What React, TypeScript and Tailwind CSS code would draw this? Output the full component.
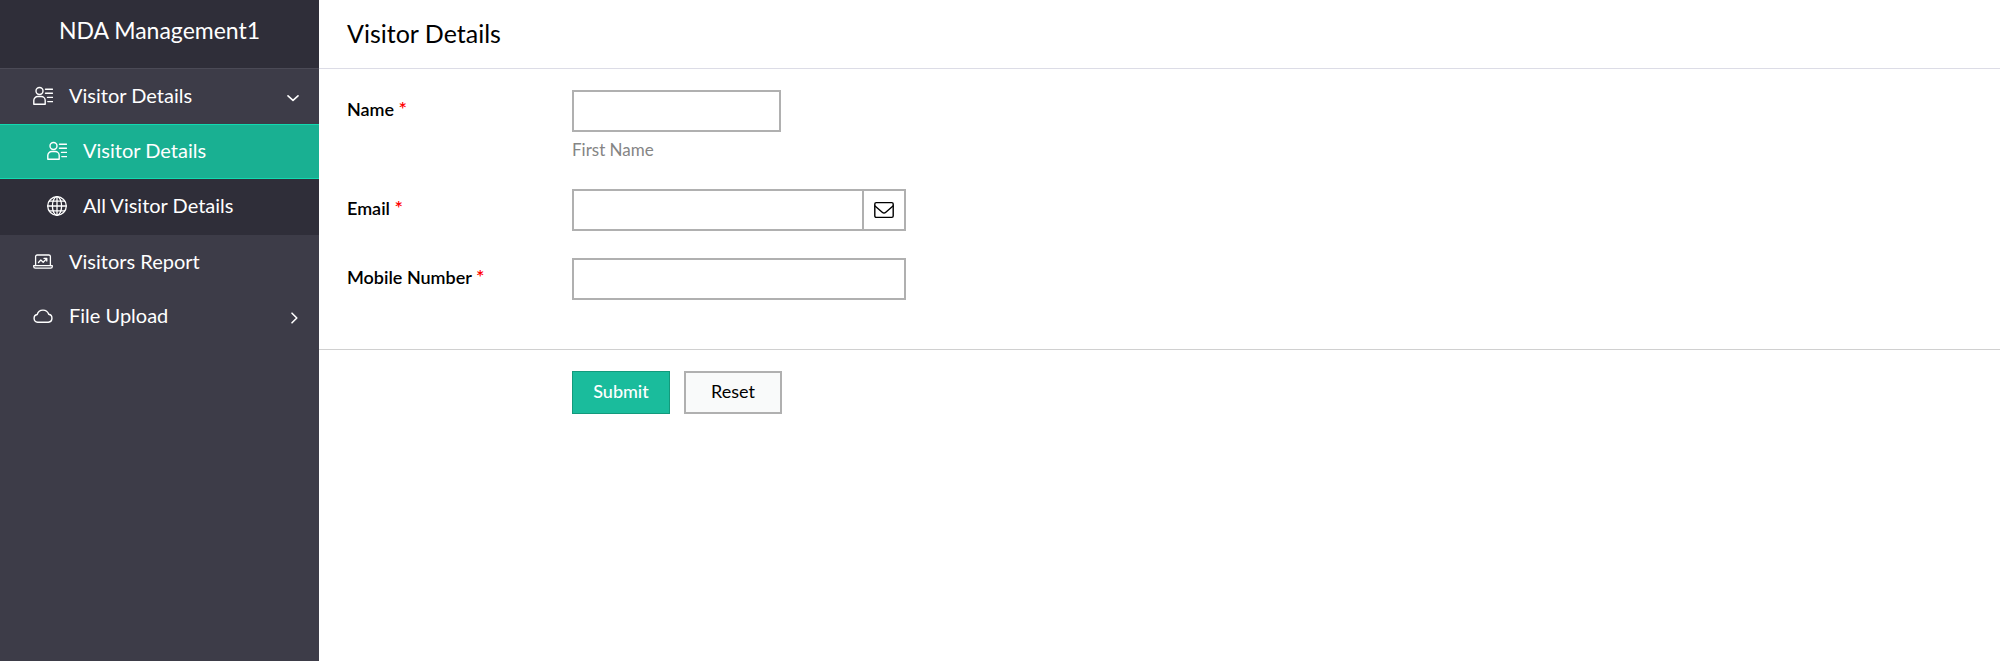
import type { ReactNode } from "react";

const stroke = {
  fill: "none",
  stroke: "currentColor",
  strokeLinecap: "round" as const,
  strokeLinejoin: "round" as const,
};

function ContactIcon() {
  return (
    <svg className="w-5 h-5" viewBox="0 0 20 20" strokeWidth="1.4" {...stroke} aria-hidden="true">
      <circle cx="6.5" cy="5" r="3.5" />
      <path d="M0.8 18.2v-3.7a4 4 0 0 1 4-4h3.4a4 4 0 0 1 4 4v3.7z" />
      <path d="M12.5 3.2H19.5M12.5 7.2H19.5M14.5 11.4H19.5M14.8 15.6H19.5" />
    </svg>
  );
}

function GlobeIcon() {
  return (
    <svg className="w-5 h-5" viewBox="0 0 20 20" strokeWidth="1.3" {...stroke} aria-hidden="true">
      <circle cx="10" cy="10" r="9.3" />
      <ellipse cx="10" cy="10" rx="4.6" ry="9.3" />
      <path d="M10 0.7V19.3M0.7 10H19.3M2.2 5.2H17.8M2.2 14.8H17.8" />
    </svg>
  );
}

function ReportIcon() {
  return (
    <svg className="w-5 h-5" viewBox="0 0 20 20" strokeWidth="1.3" {...stroke} aria-hidden="true">
      <path d="M2.6 13.5V4.6a1.6 1.6 0 0 1 1.6-1.6h11.6a1.6 1.6 0 0 1 1.6 1.6v8.9" />
      <path d="M0.7 13.7H19.3v0.8a1.7 1.7 0 0 1-1.7 1.7H2.4a1.7 1.7 0 0 1-1.7-1.7z" />
      <path d="M5.5 10.5l2.3-2.5 2.4 2.2 3.4-3.6M11 6.4h2.8v2.6" />
    </svg>
  );
}

function CloudIcon() {
  return (
    <svg className="w-5 h-5" viewBox="0 0 20 20" strokeWidth="1.4" {...stroke} aria-hidden="true">
      <path d="M4.6 16.2a3.9 3.9 0 0 1-0.4-7.7a6 6 0 0 1 11.5-0.2a4 4 0 0 1-0.3 7.9z" />
    </svg>
  );
}

function MailIcon() {
  return (
    <svg className="w-5 h-5" viewBox="0 0 20 20" strokeWidth="1.4" {...stroke} aria-hidden="true">
      <rect x="0.8" y="2.6" width="18.4" height="14.8" rx="1.4" />
      <path d="M1 6l7.2 6.2a2.7 2.7 0 0 0 3.6 0l7.2-6.2" />
    </svg>
  );
}

function Chevron({ open }: { open: boolean }) {
  return (
    <svg className="w-3 h-3 mt-1" viewBox="0 0 12 12" strokeWidth="1.6" {...stroke} aria-hidden="true">
      <path d={open ? "M1 3.8L6 8.3l5-4.5" : "M5 1.2L9.8 6L5 10.8"} />
    </svg>
  );
}

interface NavItemProps {
  icon: ReactNode;
  label: string;
  className: string;
  open?: boolean;
}

function NavItem({ icon, label, className, open }: NavItemProps) {
  return (
    <a href="#" className={`flex items-center pr-5 pb-0.5 text-xl text-white ${className}`}>
      {icon}
      <span className="ml-4 pb-0.5 flex-1">{label}</span>
      {open !== undefined && <Chevron open={open} />}
    </a>
  );
}

function FieldLabel({ htmlFor, children }: { htmlFor: string; children: ReactNode }) {
  return (
    <label htmlFor={htmlFor} className="w-[225px] shrink-0 pt-1.5 text-lg leading-6 font-semibold text-black">
      {children} <span className="text-xl leading-6 text-[#ff0000]">*</span>
    </label>
  );
}

export default function App() {
  return (
    <div className="flex min-h-screen bg-white font-[Lato,sans-serif]">
      <aside className="w-[319px] shrink-0 bg-[#3d3c48]">
        <div className="h-[69px] pb-2 flex items-center justify-center bg-[#2f2e39] border-b border-[#4b4a56] text-[23px] text-white">
          NDA Management1
        </div>
        <nav>
          <NavItem icon={<ContactIcon />} label="Visitor Details" open={true} className="h-[55px] pl-[33px]" />
          <div className="bg-[#2f2e39]">
            <NavItem
              icon={<ContactIcon />}
              label="Visitor Details"
              className="h-[55px] pl-[47px] bg-[#19b092] border-y border-[#12d9b0]"
            />
            <NavItem icon={<GlobeIcon />} label="All Visitor Details" className="h-14 pl-[47px]" />
          </div>
          <NavItem icon={<ReportIcon />} label="Visitors Report" className="h-[55px] pl-[33px]" />
          <NavItem icon={<CloudIcon />} label="File Upload" open={false} className="h-[54px] pl-[33px]" />
        </nav>
      </aside>

      <main className="flex-1 min-w-0">
        <header className="h-[69px] px-7 flex items-center border-b border-[#dcdce6]">
          <h1 className="text-[25px] text-black">Visitor Details</h1>
        </header>
        <form>
          <div className="px-7 pt-[21px] pb-[49px] border-b border-[#d0d0d0]">
            <div className="flex">
              <FieldLabel htmlFor="name">Name</FieldLabel>
              <div>
                <input id="name" type="text" className="block w-[209px] h-[42px] px-2 border-2 border-[#b0b0b0]" />
                <span className="block mt-1.5 text-[17px] leading-6 text-[#858585]">First Name</span>
              </div>
            </div>
            <div className="flex mt-[27px]">
              <FieldLabel htmlFor="email">Email</FieldLabel>
              <div className="flex w-[334px] h-[42px] border-2 border-[#b0b0b0]">
                <input id="email" type="email" className="flex-1 min-w-0 px-2" />
                <span className="w-[42px] flex items-center justify-center border-l-2 border-[#b0b0b0] text-black">
                  <MailIcon />
                </span>
              </div>
            </div>
            <div className="flex mt-[27px]">
              <FieldLabel htmlFor="mobile">Mobile Number</FieldLabel>
              <input id="mobile" type="tel" className="w-[334px] h-[42px] px-2 border-2 border-[#b0b0b0]" />
            </div>
          </div>
          <div className="flex gap-3.5 pl-[253px] pt-[21px]">
            <button
              type="submit"
              className="w-[98px] h-[43px] pb-1 bg-[#1abc9c] border border-[#139a7c] text-lg font-medium text-white"
            >
              Submit
            </button>
            <button
              type="reset"
              className="w-[98px] h-[43px] pb-1 bg-[#f9fafa] border-2 border-[#b0b0b0] text-lg text-black"
            >
              Reset
            </button>
          </div>
        </form>
      </main>
    </div>
  );
}
